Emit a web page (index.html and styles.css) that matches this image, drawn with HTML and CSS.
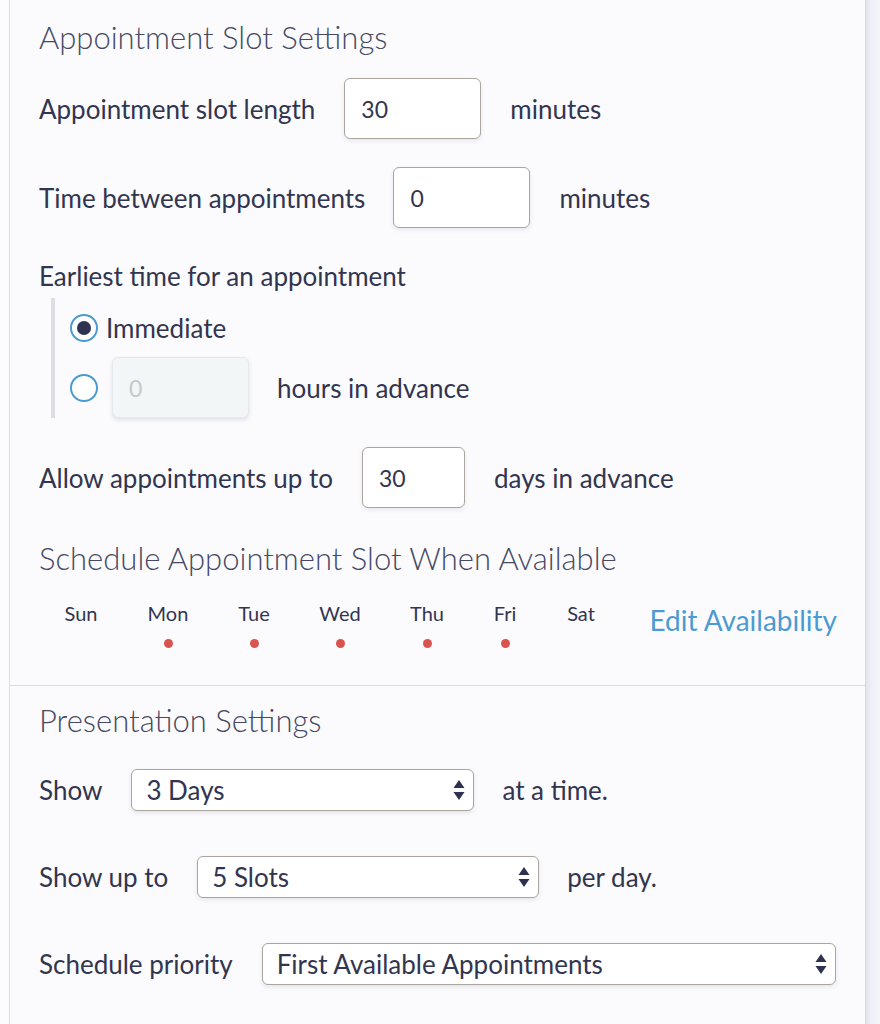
FILE: index.html
```html
<!DOCTYPE html>
<html>
<head>
<meta charset="utf-8">
<link rel="stylesheet" href="styles.css">
</head>
<body>
<div class="page">
  <div class="card">
    <section class="section first">
      <h2 class="heading">Appointment Slot Settings</h2>
      <div class="row r1">
        <span class="label">Appointment slot length</span>
        <input class="num w136" type="text" value="30">
        <span class="unit">minutes</span>
      </div>
      <div class="row r2">
        <span class="label">Time between appointments</span>
        <input class="num w136" type="text" value="0">
        <span class="unit">minutes</span>
      </div>
      <div class="label earliest">Earliest time for an appointment</div>
      <div class="radio-group">
        <div class="radio-row">
          <span class="radio checked"></span>
          <span class="label">Immediate</span>
        </div>
        <div class="radio-row second">
          <span class="radio"></span>
          <input class="num w136 disabled" type="text" value="0" disabled>
          <span class="unit">hours in advance</span>
        </div>
      </div>
      <div class="row r3">
        <span class="label">Allow appointments up to</span>
        <input class="num w102" type="text" value="30">
        <span class="unit">days in advance</span>
      </div>
      <h2 class="heading h2">Schedule Appointment Slot When Available</h2>
      <div class="days">
        <div class="day d-sun"><span>Sun</span></div>
        <div class="day d-mon"><span>Mon</span><i class="dot"></i></div>
        <div class="day d-tue"><span>Tue</span><i class="dot"></i></div>
        <div class="day d-wed"><span>Wed</span><i class="dot"></i></div>
        <div class="day d-thu"><span>Thu</span><i class="dot"></i></div>
        <div class="day d-fri"><span>Fri</span><i class="dot"></i></div>
        <div class="day d-sat"><span>Sat</span></div>
        <a class="edit">Edit Availability</a>
      </div>
    </section>
    <section class="section second-sec">
      <h2 class="heading">Presentation Settings</h2>
      <div class="row sel-row">
        <span class="label">Show</span>
        <div class="select s1"><span>3 Days</span><svg class="arrows" width="12" height="22" viewBox="0 0 12 22"><path d="M6 1 L11.5 9 L0.5 9 Z M6 21 L11.5 13 L0.5 13 Z" fill="#2e3150"/></svg></div>
        <span class="unit">at a time.</span>
      </div>
      <div class="row sel-row">
        <span class="label">Show up to</span>
        <div class="select s2"><span>5 Slots</span><svg class="arrows" width="12" height="22" viewBox="0 0 12 22"><path d="M6 1 L11.5 9 L0.5 9 Z M6 21 L11.5 13 L0.5 13 Z" fill="#2e3150"/></svg></div>
        <span class="unit">per day.</span>
      </div>
      <div class="row sel-row">
        <span class="label">Schedule priority</span>
        <div class="select s3"><span>First Available Appointments</span><svg class="arrows" width="12" height="22" viewBox="0 0 12 22"><path d="M6 1 L11.5 9 L0.5 9 Z M6 21 L11.5 13 L0.5 13 Z" fill="#2e3150"/></svg></div>
      </div>
    </section>
  </div>
  <div class="edge"></div>
</div>
</body>
</html>
```
FILE: styles.css
```css
* { box-sizing: border-box; }
html, body {
  margin: 0;
  padding: 0;
  background: #fcfcfe;
  font-family: Lato, "Noto Sans", sans-serif;
  color: #32354f;
}
.page {
  display: flex;
  height: 1024px;
  overflow: hidden;
}
.card {
  margin-left: 9px;
  width: 857px;
  border-left: 1px solid #dcdcea;
  border-right: 1px solid #d6d6e6;
  background: #fbfbfe;
}
.edge {
  flex: 1;
  background: linear-gradient(to right, #e4e4f2, #f0f0f8 6px, #f4f4fa);
}
.section {
  padding-left: 29px;
  padding-right: 28px;
}
.first {
  padding-top: 18px;
  padding-bottom: 25px;
  border-bottom: 1px solid #dcdce6;
}
.heading {
  margin: 0;
  font-weight: 300;
  font-size: 31px;
  line-height: 38px;
  color: #464963;
}
.label, .unit {
  font-size: 26px;
  line-height: 30px;
  color: #32354f;
}
.row {
  display: flex;
  align-items: center;
}
.num {
  font-family: inherit;
  font-size: 23px;
  color: #32354f;
  height: 61px;
  padding: 0 0 0 16px;
  border: 1px solid #aaa69e;
  border-radius: 6px;
  background: #fff;
  box-shadow: 0 2px 4px rgba(60, 60, 110, 0.10);
  outline: none;
}
.w136 { width: 137px; }
.w102 { width: 103px; }
.r1 { margin-top: 22px; }
.r1 .num { margin-left: 29px; margin-right: 29px; }
.r2 { margin-top: 28px; }
.r2 .num { margin-left: 28px; margin-right: 29px; }
.earliest { margin-top: 33px; }
.radio-group {
  margin-left: 12px;
  margin-top: 7px;
  border-left: 4px solid #dddde6;
  padding-left: 15px;
  padding-top: 15px;
  padding-bottom: 0;
}
.radio-row {
  display: flex;
  align-items: center;
}
.radio {
  width: 28px;
  height: 28px;
  border: 2px solid #4b9bd2;
  border-radius: 50%;
  display: flex;
  align-items: center;
  justify-content: center;
  margin-right: 8px;
  background: #fff;
  flex: none;
}
.radio.checked::after {
  content: "";
  width: 14px;
  height: 14px;
  border-radius: 50%;
  background: #2e3150;
}
.radio-row .disabled {
  margin-left: 6px;
  margin-right: 28px;
  background: #f2f6f7;
  border-color: #e6e8ee;
  color: #c8c8cc;
  box-shadow: 0 2px 4px rgba(60, 60, 110, 0.14);
}
.radio-row.second { margin-top: 14px; }
.r3 { margin-top: 29px; }
.r3 .num { margin-left: 29px; margin-right: 29px; }
.h2 { margin-top: 31px; }
.days {
  display: flex;
  align-items: flex-start;
  margin-top: 23px;
  height: 60px;
}
.day {
  width: 56px;
  display: flex;
  flex-direction: column;
  align-items: center;
  font-size: 20px;
  line-height: 26px;
  color: #32354f;
}
.d-sun { margin-left: 14px; }
.d-mon { margin-left: 31px; }
.d-tue { margin-left: 30px; }
.d-wed { margin-left: 30px; }
.d-thu { margin-left: 31px; }
.d-fri { margin-left: 22px; }
.d-sat { margin-left: 20px; }
.dot {
  width: 9px;
  height: 9px;
  border-radius: 50%;
  background: #d9534f;
  margin-top: 13px;
}
.edit {
  margin-left: auto;
  margin-top: 4px;
  font-size: 28px;
  line-height: 32px;
  color: #4b9bd2;
}
.second-sec {
  padding-top: 15px;
}
.sel-row { margin-top: 30px; }
.sel-row + .sel-row { margin-top: 45px; }
.select {
  height: 42px;
  border: 1px solid #aaa69e;
  border-radius: 6px;
  background: #fff;
  box-shadow: 0 2px 4px rgba(60, 60, 110, 0.12);
  display: flex;
  align-items: center;
  justify-content: space-between;
  padding: 0 8px 0 14px;
  font-size: 26px;
  color: #32354f;
  margin-left: 29px;
  margin-right: 28px;
}
.s1 { width: 343px; }
.s2 { width: 342px; }
.s3 { width: 574px; margin-right: 0; }
.arrows { flex: none; }
```
